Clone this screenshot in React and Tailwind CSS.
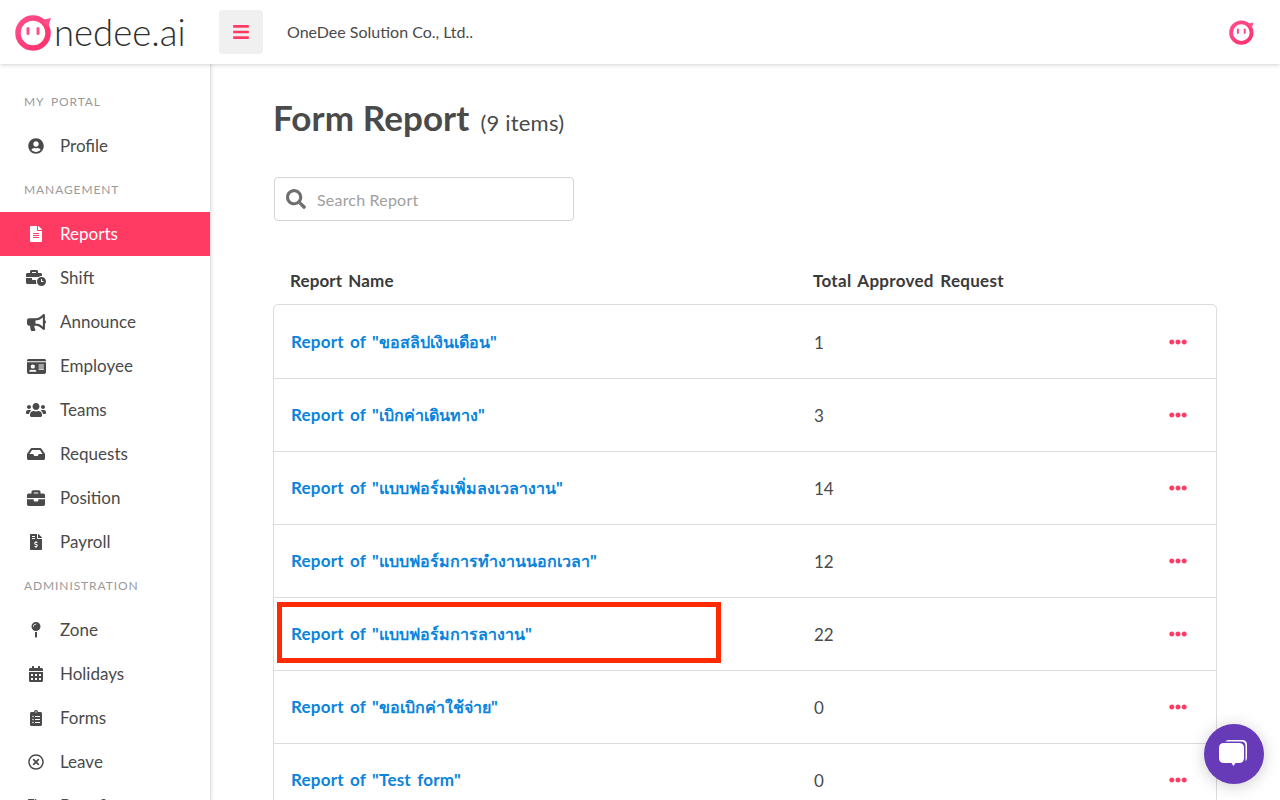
import React from "react";
import { FaUserCircle, FaFileAlt, FaBusinessTime, FaBullhorn, FaIdCard, FaUsers, FaInbox, FaBriefcase, FaFileInvoiceDollar, FaMapPin, FaCalendarAlt, FaClipboardList, FaRegTimesCircle, FaSearch, FaEllipsisH, FaBars, FaFileSignature } from "react-icons/fa";

function Face({ size }) {
  return (
    <svg width={size} height={size} viewBox="0 0 38 38" fill="none">
      <defs>
        <linearGradient id={"g" + size} x1="0" y1="0" x2="1" y2="1">
          <stop offset="0" stopColor="#ff4f8b" />
          <stop offset="1" stopColor="#ff2f6d" />
        </linearGradient>
      </defs>
      <circle cx="18" cy="20" r="15" fill="#fff" stroke={`url(#g${size})`} strokeWidth="5.5" />
      <path d="M27 7 L36 5 L33 14 Z" fill="#ff4f8b" />
      <rect x="11.5" y="14" width="3" height="8" rx="1.5" fill="#ff4f8b" />
      <rect x="21.5" y="14" width="3" height="8" rx="1.5" fill="#ff4f8b" />
    </svg>
  );
}

function Label({ children }) {
  return <div className="h-[44px] flex items-center pl-[24px] text-[12px] tracking-[0.9px] [word-spacing:3px] text-[#9a9a9a] uppercase">{children}</div>;
}

function Item({ icon: Icon, size = 16, children, active }) {
  return (
    <div className={`h-[44px] flex items-center text-[17px] ${active ? "bg-[#ff3b63] text-white" : "text-[#4a4a4a]"}`}>
      <span className="w-[60px] flex justify-center pl-[12px] shrink-0">
        <Icon style={{ width: size, height: size }} />
      </span>
      <span>{children}</span>
    </div>
  );
}

const rows = [
  ["ขอสลิปเงินเดือน", "1"],
  ["เบิกค่าเดินทาง", "3"],
  ["แบบฟอร์มเพิ่มลงเวลางาน", "14"],
  ["แบบฟอร์มการทำงานนอกเวลา", "12"],
  ["แบบฟอร์มการลางาน", "22"],
  ["ขอเบิกค่าใช้จ่าย", "0"],
];

export default function App() {
  return (
    <div className="relative h-[800px] w-[1280px] overflow-hidden bg-white text-[#4a4a4a] font-['Lato','Noto_Sans','DejaVu_Sans',sans-serif]">
      <header className="relative z-20 h-[64px] flex items-center bg-white shadow-[0_1px_4px_rgba(0,0,0,0.18)]">
        <div className="w-[219px] flex items-center pl-[15px] shrink-0">
          <Face size={38} />
          <span className="text-[36.5px] leading-none font-light text-[#2f2f2f] ml-[1px]">nedee.ai</span>
        </div>
        <button className="w-[44px] h-[44px] bg-[#f0f0f0] rounded-[4px] flex items-center justify-center text-[#ff3b63]">
          <FaBars style={{ width: 18, height: 18 }} />
        </button>
        <span className="ml-[24px] text-[16px] text-[#4a4a4a]">OneDee Solution Co., Ltd..</span>
        <span className="ml-auto mr-[25px]"><Face size={26} /></span>
      </header>
      <div className="flex h-[736px]">
        <aside className="relative z-10 w-[211px] shrink-0 overflow-hidden bg-white pt-[16px] border-r border-[#e4e4e4] shadow-[1px_0_3px_rgba(0,0,0,0.1)]">
          <Label>My Portal</Label>
          <Item icon={FaUserCircle}>Profile</Item>
          <Label>Management</Label>
          <Item icon={FaFileAlt} active>Reports</Item>
          <Item icon={FaBusinessTime} size={20}>Shift</Item>
          <Item icon={FaBullhorn} size={19}>Announce</Item>
          <Item icon={FaIdCard} size={19}>Employee</Item>
          <Item icon={FaUsers} size={20}>Teams</Item>
          <Item icon={FaInbox} size={18}>Requests</Item>
          <Item icon={FaBriefcase} size={18}>Position</Item>
          <Item icon={FaFileInvoiceDollar}>Payroll</Item>
          <Label>Administration</Label>
          <Item icon={FaMapPin}>Zone</Item>
          <Item icon={FaCalendarAlt}>Holidays</Item>
          <Item icon={FaClipboardList}>Forms</Item>
          <Item icon={FaRegTimesCircle}>Leave</Item>
          <Item icon={FaFileSignature}>Benefits</Item>
        </aside>
        <main className="flex-1 pl-[63px] pr-[63px] min-w-0">
          <div className="flex items-baseline mt-[31px] h-[44px] -ml-[1px]">
            <h1 className="text-[35px] tracking-[0.1px] font-bold text-[#4a4a4a] leading-[44px]">Form Report</h1>
            <span className="ml-[11px] text-[22px] tracking-[0.2px] text-[#4a4a4a]">(9 items)</span>
          </div>
          <div className="mt-[38px] w-[300px] h-[44px] border border-[#d4d4d4] rounded-[4px] flex items-center pl-[11px]">
            <FaSearch className="text-[#6f6f6f]" style={{ width: 20, height: 20 }} />
            <span className="ml-[11px] pt-[2px] text-[16px] tracking-[0.2px] text-[#a0a0a0]">Search Report</span>
          </div>
          <div className="mt-[38px] h-[45px] flex items-center pb-[1px] text-[17px] font-bold text-[#3a3a3a]">
            <span className="w-[539px] pl-[16px] tracking-[0.1px] [word-spacing:2px]">Report Name</span>
            <span className="tracking-[0.3px] [word-spacing:2px]">Total Approved Request</span>
          </div>
          <div className="border border-[#dcdcdc] rounded-[5px] -ml-[1px]">
            {rows.map(([n, v], i) => (
              <div key={i} className={`h-[73px] flex items-center ${i ? "border-t border-[#dcdcdc]" : ""}`}>
                <span className="w-[539px] ml-[1px] pl-[16px] text-[17px] font-bold text-[#0a84dc] tracking-[0.2px] [word-spacing:2px]">Report of "<span className="text-[16px] tracking-normal">{n}</span>"</span>
                <span className="pt-[2px] text-[17px] text-[#4a4a4a]">{v}</span>
                <FaEllipsisH className="ml-auto mr-[29px] text-[#ff3b63]" style={{ width: 18, height: 18 }} />
              </div>
            ))}
            <div className="h-[73px] flex items-center border-t border-[#dcdcdc]">
              <span className="w-[539px] ml-[1px] pl-[16px] text-[17px] font-bold text-[#0a84dc] tracking-[0.2px] [word-spacing:2px]">Report of "Test form"</span>
              <span className="pt-[2px] text-[17px] text-[#4a4a4a]">0</span>
              <FaEllipsisH className="ml-auto mr-[29px] text-[#ff3b63]" style={{ width: 18, height: 18 }} />
            </div>
          </div>
        </main>
      </div>
      <div className="absolute left-[277px] top-[602px] w-[444px] h-[61px] border-[5px] border-[#ff2a00] pointer-events-none z-20" />
      <div className="absolute left-[1204px] top-[724px] w-[60px] h-[60px] rounded-full bg-[#673ab7] shadow-[0_2px_16px_rgba(0,0,0,0.2)] flex items-center justify-center z-30">
        <svg width="36" height="36" viewBox="0 0 36 36">
          <path d="M9 5.5 Q10 4 13 4 H26 Q31 4 31 9 V21 Q31 24 29.5 25 V10 Q29.5 5.5 25 5.5 Z" fill="#fff" />
          <path d="M8 7 H23 Q28 7 28 12 V22 Q28 27 23 27 H19.5 L17.5 30 L15.5 27 H8 Q3 27 3 22 V12 Q3 7 8 7 Z" fill="#fff" />
        </svg>
      </div>
    </div>
  );
}
